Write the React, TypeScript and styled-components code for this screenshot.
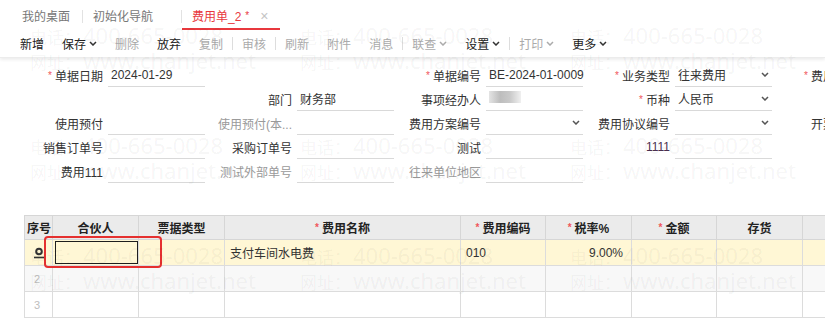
import React from 'react';
import styled, { createGlobalStyle } from 'styled-components';

const GlobalStyle = createGlobalStyle`
  html, body {
    margin: 0;
    padding: 0;
    background: #ffffff;
  }

  body {
    color: #333333;
    font-family: "Liberation Sans", "Noto Sans CJK SC", sans-serif;
    font-size: 12px;
  }

  * {
    box-sizing: border-box;
  }
`;

const Page = styled('div')`
  background: #ffffff;
  height: 330px;
  overflow: hidden;
  position: relative;
  width: 825px;
`;

const TabBar = styled('div')`
  align-items: stretch;
  display: flex;
  height: 30px;
  padding-left: 12px;
`;

const Tab = styled('div')<{ $active?: boolean; $width: number }>`
  align-items: center;
  border-bottom: 2px solid ${ (p) => (p.$active ? '#e8383d' : 'transparent') };
  color: ${ (p) => (p.$active ? '#e8383d' : '#777777') };
  display: flex;
  gap: 11px;
  padding-left: 10px;
  padding-top: 3px;
  width: ${ (p) => p.$width }px;
`;

const TabMark = styled('span')`
  font-size: 10px;
  margin-left: 4px;
  position: relative;
  top: -2px;
`;

const TabClose = styled('span')`
  color: #c4c4c4;
  font-size: 14px;
`;

const TabSep = styled('span')`
  align-self: center;
  background: #e2e2e2;
  height: 13px;
  margin-top: 3px;
  width: 1px;
`;

const Toolbar = styled('div')`
  align-items: center;
  border-bottom: 1px solid #ececec;
  box-shadow: 0 2px 3px rgba(0, 0, 0, 0.07);
  display: flex;
  height: 28px;
  padding-left: 11px;
  position: relative;
`;

const ToolButton = styled('span')<{ $disabled?: boolean }>`
  align-items: center;
  color: ${ (p) => (p.$disabled ? '#ababab' : '#222222') };
  display: inline-flex;
  gap: 3px;
  padding: 0 9px;
`;

const ToolSep = styled('span')`
  background: #dddddd;
  height: 13px;
  width: 1px;
`;

const Form = styled('div')`
  display: grid;
  grid-auto-rows: 24px;
  grid-template-columns: repeat(5, 92px 97px);
  padding: 5px 0 0 16px;
`;

const Label = styled('div')<{ $tone?: string }>`
  align-items: center;
  color: ${ (p) => p.$tone || '#333333' };
  display: flex;
  justify-content: flex-end;
  padding-right: 5px;
  white-space: nowrap;
`;

const Star = styled('span')`
  color: #f0565b;
  font-size: 10px;
  margin-right: 3px;
`;

const Input = styled('div')<{ $line: boolean }>`
  align-items: center;
  border-bottom: 1px solid ${ (p) => (p.$line ? '#d9d9d9' : 'transparent') };
  display: flex;
  justify-content: space-between;
  padding: 0 3px 0 3px;
  white-space: nowrap;
`;

const Masked = styled('span')`
  background: linear-gradient(90deg, #e4e4e4, #bdbdbd 35%, #c9c9c9 65%, #f0f0f0);
  display: inline-block;
  height: 12px;
  width: 32px;
`;

const Table = styled('div')`
  margin: 32px 0 0 24px;
  position: relative;
  width: max-content;
`;

const TRow = styled('div')<{ $bg: string; $height: number }>`
  background: ${ (p) => p.$bg };
  display: grid;
  grid-template-columns: 29px 86px 86px 236px 85px 86px 85px 86px 60px;
  height: ${ (p) => p.$height }px;
`;

const HeadCell = styled('div')<{ $first?: boolean; $left?: boolean }>`
  align-items: center;
  border-bottom: 1px solid #d6d6d6;
  border-left: ${ (p) => (p.$first ? '1px solid #d6d6d6' : 'none') };
  border-right: 1px solid #d6d6d6;
  border-top: 1px solid #d6d6d6;
  color: #222222;
  display: flex;
  font-weight: bold;
  justify-content: ${ (p) => (p.$left ? 'flex-start' : 'center') };
  padding-left: ${ (p) => (p.$left ? '2px' : '0') };
`;

const Cell = styled('div')<{ $first?: boolean; $align?: 'left' | 'right' }>`
  align-items: center;
  border-bottom: 1px solid #dcdcdc;
  border-left: ${ (p) => (p.$first ? '1px solid #dcdcdc' : 'none') };
  border-right: 1px solid #dcdcdc;
  display: flex;
  justify-content: ${ (p) => (p.$align === 'right' ? 'flex-end' : 'flex-start') };
  padding: ${ (p) => (p.$first ? '0 0 0 8px' : p.$align === 'right' ? '0 8px 0 0' : '0 0 0 5px') };
`;

const EditCell = styled('div')`
  border-bottom: 1px solid #dcdcdc;
  border-right: 1px solid #dcdcdc;
  padding: 1px 0 1px 2px;
`;

const Editor = styled('div')`
  border: 1px solid #1e1e1e;
  height: 100%;
  width: 100%;
`;

const RowNo = styled('span')`
  color: #bdbdbd;
  font-size: 11px;
  padding-left: 1px;
`;

const Highlight = styled('div')`
  border: 2px solid #e5302f;
  border-radius: 4px;
  height: 32px;
  left: 20px;
  pointer-events: none;
  position: absolute;
  top: 21px;
  width: 118px;
`;

const Watermark = styled('div')`
  display: grid;
  grid-auto-rows: 110px;
  grid-template-columns: repeat(3, 270px);
  inset: 0;
  padding: 24px 0 0 30px;
  pointer-events: none;
  position: absolute;
`;

const MarkTile = styled('div')`
  color: rgba(0, 0, 0, 0.05);
  font-family: "Noto Sans", "Noto Sans CJK SC", sans-serif;
  font-size: 22px;
  line-height: 23px;
  white-space: nowrap;
`;

const MarkPrefix = styled('span')`
  font-size: 17px;
  margin-right: 2px;
`;

const Chevron = ({ color = '#333333' }: { color?: string }) => (
  <svg width='8' height='5' viewBox='0 0 8 5' fill='none'>
    <path d='M1 1 L4 4 L7 1' stroke={ color } strokeWidth='1.5' />
  </svg>
);

const RowIcon = () => (
  <svg width='12' height='12' viewBox='0 0 12 12' fill='none'>
    <circle cx='6' cy='4.5' r='2.8' stroke='#333333' strokeWidth='2' />
    <path d='M1 10.5 H11' stroke='#333333' strokeWidth='1.6' />
  </svg>
);

type Field = {
  label: string;
  value?: string;
  required?: boolean;
  select?: boolean;
  muted?: boolean;
  tone?: string;
  masked?: boolean;
} | null;

const formRows: Field[][] = [
  [
    { label: '单据日期', required: true, value: '2024-01-29' },
    null,
    { label: '单据编号', required: true, value: 'BE-2024-01-0009' },
    { label: '业务类型', required: true, value: '往来费用', select: true },
    { label: '费用类型', required: true, select: true },
  ],
  [
    null,
    { label: '部门', value: '财务部' },
    { label: '事项经办人', masked: true },
    { label: '币种', required: true, value: '人民币', select: true },
    null,
  ],
  [
    { label: '使用预付' },
    { label: '使用预付(本...', muted: true },
    { label: '费用方案编号', select: true },
    { label: '费用协议编号', select: true },
    { label: '开票类型' },
  ],
  [
    { label: '销售订单号' },
    { label: '采购订单号' },
    { label: '测试' },
    { label: '1111', tone: '#4a2f4f' },
    null,
  ],
  [
    { label: '费用111' },
    { label: '测试外部单号', muted: true },
    { label: '往来单位地区', muted: true },
    null,
    null,
  ],
];

const tools: { text: string; disabled?: boolean; menu?: boolean; sepBefore?: boolean }[] = [
  { text: '新增' },
  { text: '保存', menu: true },
  { text: '删除', disabled: true },
  { text: '放弃' },
  { text: '复制', disabled: true },
  { text: '审核', disabled: true, sepBefore: true },
  { text: '刷新', disabled: true, sepBefore: true },
  { text: '附件', disabled: true },
  { text: '消息', disabled: true },
  { text: '联查', disabled: true, menu: true, sepBefore: true },
  { text: '设置', menu: true },
  { text: '打印', disabled: true, menu: true, sepBefore: true },
  { text: '更多', menu: true },
];

const headers: { text: string; required?: boolean }[] = [
  { text: '合伙人' },
  { text: '票据类型' },
  { text: '费用名称', required: true },
  { text: '费用编码', required: true },
  { text: '税率%', required: true },
  { text: '金额', required: true },
  { text: '存货' },
  { text: '' },
];

const App: React.FC = () => {
  return (
    <Page>
      <GlobalStyle />
      <TabBar>
        <Tab $width={ 70 }>我的桌面</Tab>
        <TabSep />
        <Tab $width={ 98 }>初始化导航</Tab>
        <TabSep />
        <Tab $width={ 98 } $active>
          <span>费用单_2<TabMark>*</TabMark></span>
          <TabClose>×</TabClose>
        </Tab>
      </TabBar>

      <Toolbar>
        {
          tools.map((tool) => (
            <React.Fragment key={ tool.text }>
              { tool.sepBefore && <ToolSep /> }
              <ToolButton $disabled={ tool.disabled }>
                { tool.text }
                { tool.menu && <Chevron color={ tool.disabled ? '#ababab' : '#333333' } /> }
              </ToolButton>
            </React.Fragment>
          ))
        }
      </Toolbar>

      <Form>
        {
          formRows.map((row, r) =>
            row.map((field, c) => {
              if (!field) {
                return (
                  <React.Fragment key={ `${ r }-${ c }` }>
                    <Label />
                    <Input $line={ false } />
                  </React.Fragment>
                );
              }
              return (
                <React.Fragment key={ `${ r }-${ c }` }>
                  <Label $tone={ field.muted ? '#9a9a9a' : field.tone }>
                    { field.required && <Star>*</Star> }
                    { field.label }
                  </Label>
                  <Input $line>
                    <span>{ field.masked ? <Masked /> : field.value }</span>
                    { field.select && <Chevron color='#555555' /> }
                  </Input>
                </React.Fragment>
              );
            })
          )
        }
      </Form>

      <Table>
        <TRow $bg='#ebebeb' $height={ 25 }>
          <HeadCell $first $left>序号</HeadCell>
          {
            headers.map((h, i) => (
              <HeadCell key={ i }>
                { h.required && <Star>*</Star> }
                { h.text }
              </HeadCell>
            ))
          }
        </TRow>
        <TRow $bg='#fff7d5' $height={ 26 }>
          <Cell $first><RowIcon /></Cell>
          <EditCell><Editor /></EditCell>
          <Cell />
          <Cell>支付车间水电费</Cell>
          <Cell>010</Cell>
          <Cell $align='right'>9.00%</Cell>
          <Cell />
          <Cell />
          <Cell />
        </TRow>
        <TRow $bg='#f8f8f8' $height={ 26 }>
          <Cell $first><RowNo>2</RowNo></Cell>
          <Cell /><Cell /><Cell /><Cell /><Cell /><Cell /><Cell /><Cell />
        </TRow>
        <TRow $bg='#ffffff' $height={ 26 }>
          <Cell $first><RowNo>3</RowNo></Cell>
          <Cell /><Cell /><Cell /><Cell /><Cell /><Cell /><Cell /><Cell />
        </TRow>
        <Highlight />
      </Table>

      <Watermark>
        {
          Array.from({ length: 9 }).map((_, i) => (
            <MarkTile key={ i }>
              <div><MarkPrefix>电话：</MarkPrefix>400-665-0028</div>
              <div><MarkPrefix>网址：</MarkPrefix>www.chanjet.net</div>
            </MarkTile>
          ))
        }
      </Watermark>
    </Page>
  );
};

export default App;
